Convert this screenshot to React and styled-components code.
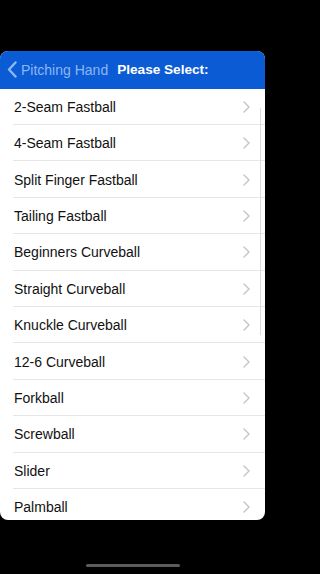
import React from "react";
import styled, { createGlobalStyle } from "styled-components";

const Global = createGlobalStyle`
  html, body { margin: 0; padding: 0; background: #000; }
  body { font-family: "Liberation Sans", Arial, sans-serif; }
`;

const Screen = styled.div`
  width: 265px;
  height: 574px;
  background: #000;
  display: flex;
  flex-direction: column;
  overflow: hidden;
`;

const Sheet = styled.div`
  margin-top: 51px;
  height: 469px;
  background: #fff;
  border-radius: 8px;
  overflow: hidden;
  display: flex;
  flex-direction: column;
  position: relative;
`;

const NavBar = styled.div`
  height: 37.6px;
  flex-shrink: 0;
  background: #0b5bd5;
  display: flex;
  align-items: center;
  padding-left: 7px;
  gap: 9px;
`;

const Back = styled.div`
  display: flex;
  align-items: center;
  gap: 4px;
  color: #8db6f4;
  font-size: 14px;
`;

const Title = styled.div`
  color: #fff;
  font-weight: bold;
  font-size: 13.6px;
`;

const List = styled.div`
  display: flex;
  flex-direction: column;
`;

const Row = styled.div`
  height: 36.4px;
  flex-shrink: 0;
  display: flex;
  align-items: center;
  justify-content: space-between;
  padding-left: 14px;
  padding-right: 15px;
  position: relative;
  font-size: 14px;
  color: #111;
  &:not(:last-child)::after {
    content: "";
    position: absolute;
    left: 13px;
    right: 0;
    bottom: 0;
    height: 1px;
    background: #e6e6e8;
  }
`;

const ScrollIndicator = styled.div`
  position: absolute;
  right: 4px;
  top: 57px;
  width: 1px;
  height: 227px;
  background: #dcdcdf;
`;

const HomeBar = styled.div`
  margin: 44px auto 0;
  width: 94px;
  height: 3px;
  border-radius: 2px;
  background: #5c5c5c;
`;

const items = [
  "2-Seam Fastball",
  "4-Seam Fastball",
  "Split Finger Fastball",
  "Tailing Fastball",
  "Beginners Curveball",
  "Straight Curveball",
  "Knuckle Curveball",
  "12-6 Curveball",
  "Forkball",
  "Screwball",
  "Slider",
  "Palmball",
];

const Chevron = () => (
  <svg width="7" height="12" viewBox="0 0 7 12" fill="none">
    <path d="M1 1l5 5-5 5" stroke="#c4c4c8" strokeWidth="1.4" strokeLinecap="round" strokeLinejoin="round" />
  </svg>
);

const BackChevron = () => (
  <svg width="10" height="17" viewBox="0 0 10 17" fill="none">
    <path d="M8.5 1.5L2 8.5l6.5 7" stroke="#8db6f4" strokeWidth="2.4" strokeLinecap="round" strokeLinejoin="round" />
  </svg>
);

export default function App() {
  return (
    <>
      <Global />
      <Screen>
        <Sheet>
          <NavBar>
            <Back>
              <BackChevron />
              <span>Pitching Hand</span>
            </Back>
            <Title>Please Select:</Title>
          </NavBar>
          <List>
            {items.map((t) => (
              <Row key={t}>
                <span>{t}</span>
                <Chevron />
              </Row>
            ))}
          </List>
          <ScrollIndicator />
        </Sheet>
        <HomeBar />
      </Screen>
    </>
  );
}
